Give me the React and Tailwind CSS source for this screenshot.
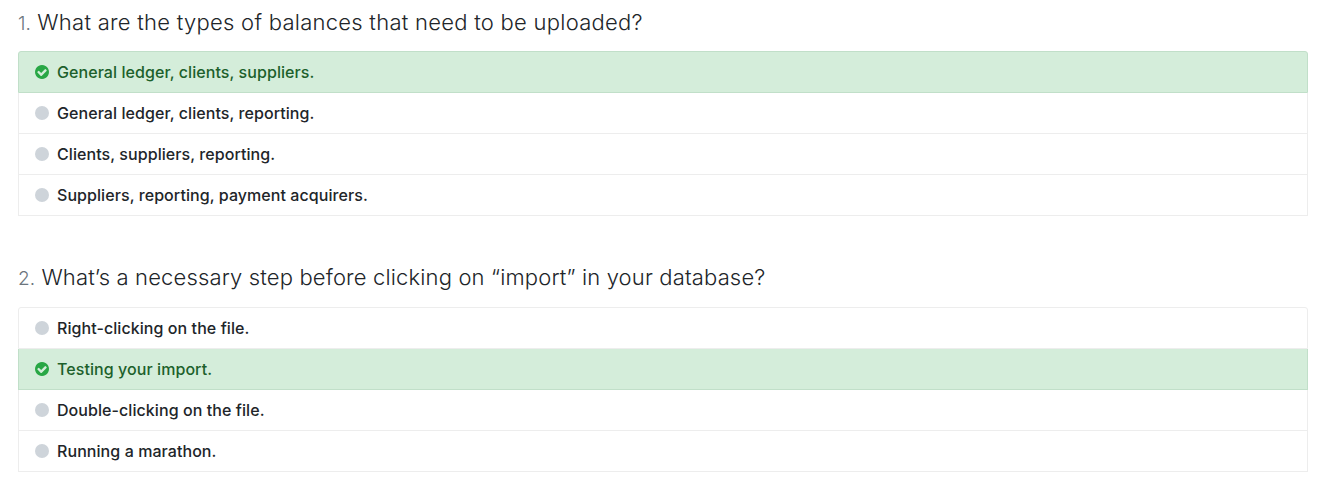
const questions = [
  {
    title: "What are the types of balances that need to be uploaded?",
    heading: "mb-[15px] tracking-[0.26px]",
    correct: 0,
    answers: [
      "General ledger, clients, suppliers.",
      "General ledger, clients, reporting.",
      "Clients, suppliers, reporting.",
      "Suppliers, reporting, payment acquirers.",
    ],
  },
  {
    title: "What’s a necessary step before clicking on “import” in your database?",
    heading: "mb-4 tracking-[0.15px]",
    correct: 1,
    answers: [
      "Right-clicking on the file.",
      "Testing your import.",
      "Double-clicking on the file.",
      "Running a marathon.",
    ],
  },
];

function CheckIcon() {
  return (
    <svg viewBox="128 128 1536 1536" className="mr-2 size-3.5 fill-[#28a745]" aria-hidden="true">
      <path d="M1412 734q0-28-18-46l-91-90q-19-19-45-19t-45 19l-408 407-226-226q-19-19-45-19t-45 19l-91 90q-18 18-18 46 0 27 18 45l362 362q19 19 45 19 27 0 46-19l543-543q18-18 18-45zm252 162q0 209-103 385.5t-279.5 279.5-385.5 103-385.5-103-279.5-279.5-103-385.5 103-385.5 279.5-279.5 385.5-103 385.5 103 279.5 279.5 103 385.5z" />
    </svg>
  );
}

function Answer({ text, correct, first }) {
  return (
    <li
      className={`flex items-center border pl-4 text-base font-medium tracking-[0.07px] ${
        first ? "h-[42px] rounded-t-[3px]" : "h-[41px] border-t-0"
      } ${
        correct
          ? "border-[#c1dfc9] bg-[#d4edda] text-[#1c602b]"
          : "border-[#ededed] bg-white text-[#212529]"
      }`}
    >
      {correct ? (
        <CheckIcon />
      ) : (
        <span className="mr-2 size-3.5 rounded-full bg-[#ced4da]" />
      )}
      <span>{text}</span>
    </li>
  );
}

export default function App() {
  return (
    <main className="flex h-[480px] flex-col gap-[47px] bg-white pr-[13px] pl-[18px] pt-2 font-['Inter',sans-serif]">
      {questions.map((q, i) => (
        <section key={q.title}>
          <h2
            className={`h-7 whitespace-nowrap text-[22px] leading-7 font-[330] text-[#212529] ${q.heading}`}
          >
            <span className="text-[19px] font-light tracking-normal text-[#6c757d]">{i + 1}.</span>{" "}
            {q.title}
          </h2>
          <ul>
            {q.answers.map((text, j) => (
              <Answer key={text} text={text} correct={j === q.correct} first={j === 0} />
            ))}
          </ul>
        </section>
      ))}
    </main>
  );
}
